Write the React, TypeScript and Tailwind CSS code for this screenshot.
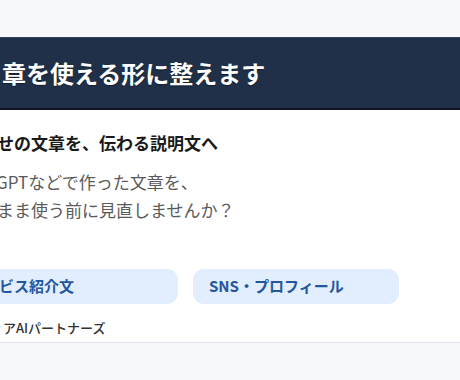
import { FC } from "react";

const App: FC = () => {
  return (
    <div
      className="w-[460px] h-[380px] overflow-hidden bg-[#f7f8fa]"
      style={{ fontFamily: '"Noto Sans CJK JP", "Noto Sans", sans-serif' }}
    >
      <div className="h-[37px]" />
      <header className="h-[73px] bg-[#203049] border-t border-[#34445c] border-b-2 border-b-[#10151f] flex items-center">
        <h1 className="ml-[2px] text-[24px] font-bold text-white whitespace-nowrap [text-shadow:0_1px_1px_rgba(0,0,0,0.4)]">
          章を使える形に整えます
        </h1>
      </header>
      <section className="bg-white border-b border-[#e3e6ec] h-[233px] pt-[21px] flex flex-col">
        <h2 className="-ml-[3px] text-[17px] font-bold text-[#1a1a1a] whitespace-nowrap leading-[24px]">
          せの文章を、伝わる説明文へ
        </h2>
        <p className="mt-[13px] text-[17px] text-[#5a5a5a] leading-[28px] whitespace-nowrap">
          <span className="block -ml-[4px]">GPTなどで作った文章を、</span>
          <span className="block -ml-[3px]">まま使う前に見直しませんか？</span>
        </p>
        <div className="mt-[45px] flex gap-[15px]">
          <button className="-ml-[48px] w-[226px] h-[35px] rounded-[11px] bg-[#e2eefd] text-left pl-[47px] text-[15px] font-bold text-[#2456a0] whitespace-nowrap">
            ビス紹介文
          </button>
          <button className="w-[206px] h-[35px] rounded-[11px] bg-[#e2eefd] text-left pl-[16px] text-[15px] font-bold text-[#2456a0] whitespace-nowrap">
            SNS・プロフィール
          </button>
        </div>
        <p className="mt-[14px] -ml-[10px] text-[13px] font-medium text-[#333] whitespace-nowrap">
          ィアAIパートナーズ
        </p>
      </section>
    </div>
  );
};

export default App;
